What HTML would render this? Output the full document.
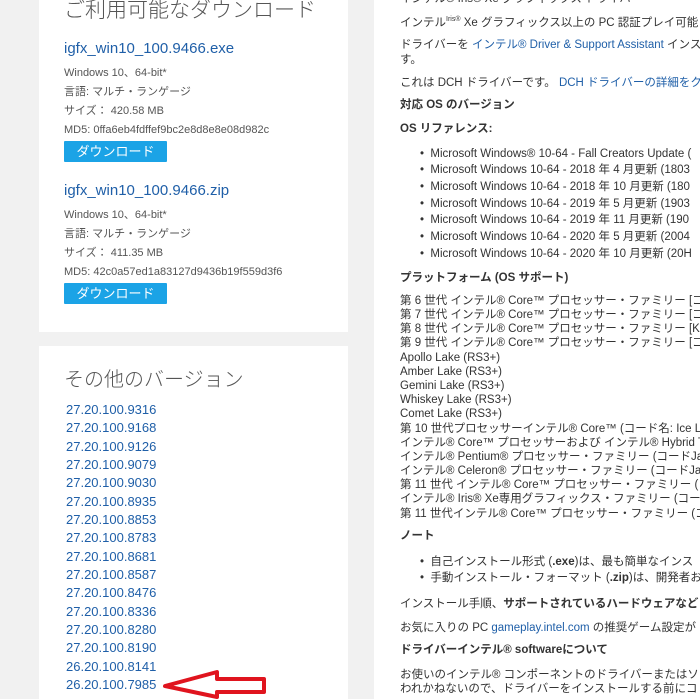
<!DOCTYPE html>
<html><head><meta charset="utf-8"><style>
body{margin:0;width:700px;height:699px;background:#f1f1f1;position:relative;overflow:hidden;font-family:"Liberation Sans","Noto Sans CJK JP",sans-serif;color:#444}
.card{position:absolute;background:#fff}
.t{position:absolute;white-space:nowrap;line-height:1}
.h{font-size:21px;color:#555;font-weight:300}
.lk{color:#1f5fa8}
.s{font-size:11px;color:#555}
.btn{position:absolute;left:64px;width:103px;height:21px;background:#1ba3e6;color:#fff;font-size:13px;text-align:center;line-height:21px;border-radius:1px}
.r{font-size:11.5px;color:#333}
.b{font-weight:bold}
.v{font-size:13px;color:#1f5fa8;left:66px}
</style></head><body>
<div class="card" style="left:39px;top:0;width:309px;height:332px"></div>
<div class="card" style="left:39px;top:346px;width:309px;height:353px"></div>
<div class="card" style="left:374px;top:0;width:326px;height:699px"></div>

<div class="t h" style="left:64px;top:0">ご利用可能なダウンロード</div>
<div class="t lk" style="left:64px;top:41px;font-size:15px">igfx_win10_100.9466.exe</div>
<div class="t s" style="left:64px;top:68px">Windows 10、64-bit*</div>
<div class="t s" style="left:64px;top:87px">言語: マルチ・ランゲージ</div>
<div class="t s" style="left:64px;top:106px">サイズ： 420.58 MB</div>
<div class="t s" style="left:64px;top:125px">MD5: 0ffa6eb4fdffef9bc2e8d8e8e08d982c</div>
<div class="btn" style="top:141px">ダウンロード</div>
<div class="t lk" style="left:64px;top:183px;font-size:15px">igfx_win10_100.9466.zip</div>
<div class="t s" style="left:64px;top:210px">Windows 10、64-bit*</div>
<div class="t s" style="left:64px;top:229px">言語: マルチ・ランゲージ</div>
<div class="t s" style="left:64px;top:248px">サイズ： 411.35 MB</div>
<div class="t s" style="left:64px;top:267px">MD5: 42c0a57ed1a83127d9436b19f559d3f6</div>
<div class="btn" style="top:283px">ダウンロード</div>

<div class="t h" style="left:64px;top:370px;font-size:20px">その他のバージョン</div>
<div class="t v" style="top:403px">27.20.100.9316</div>
<div class="t v" style="top:421px">27.20.100.9168</div>
<div class="t v" style="top:440px">27.20.100.9126</div>
<div class="t v" style="top:458px">27.20.100.9079</div>
<div class="t v" style="top:476px">27.20.100.9030</div>
<div class="t v" style="top:495px">27.20.100.8935</div>
<div class="t v" style="top:513px">27.20.100.8853</div>
<div class="t v" style="top:531px">27.20.100.8783</div>
<div class="t v" style="top:550px">27.20.100.8681</div>
<div class="t v" style="top:568px">27.20.100.8587</div>
<div class="t v" style="top:586px">27.20.100.8476</div>
<div class="t v" style="top:605px">27.20.100.8336</div>
<div class="t v" style="top:623px">27.20.100.8280</div>
<div class="t v" style="top:641px">27.20.100.8190</div>
<div class="t v" style="top:660px">26.20.100.8141</div>
<div class="t v" style="top:678px">26.20.100.7985</div>
<svg style="position:absolute;left:0;top:0" width="700" height="699"><polygon points="165,686 217,672 217,679 264,679 264,692 217,692 217,697" fill="none" stroke="#e0141e" stroke-width="4" stroke-linejoin="round"/></svg>

<div class="t r" style="left:400px;top:-6px">インテル® Iris® Xe グラフィックス ドライバー</div>
<div class="t r" style="left:400px;top:16px">インテル<sup style="font-size:7px">Iris®</sup> Xe グラフィックス以上の PC 認証プレイ可能</div>
<div class="t r" style="left:400px;top:40px">ドライバーを <span class="lk">インテル® Driver &amp; Support Assistant</span> インストール</div>
<div class="t r" style="left:400px;top:55px">す。</div>
<div class="t r" style="left:400px;top:78px">これは DCH ドライバーです。 <span class="lk">DCH ドライバーの詳細をク</span></div>
<div class="t r b" style="left:400px;top:100px">対応 OS のバージョン</div>
<div class="t r b" style="left:400px;top:124px">OS リファレンス:</div>
<div class="t r" style="left:420px;top:149px">•&nbsp;&nbsp;Microsoft Windows® 10-64 - Fall Creators Update (</div>
<div class="t r" style="left:420px;top:165px">•&nbsp;&nbsp;Microsoft Windows 10-64 - 2018 年 4 月更新 (1803</div>
<div class="t r" style="left:420px;top:182px">•&nbsp;&nbsp;Microsoft Windows 10-64 - 2018 年 10 月更新 (180</div>
<div class="t r" style="left:420px;top:199px">•&nbsp;&nbsp;Microsoft Windows 10-64 - 2019 年 5 月更新 (1903</div>
<div class="t r" style="left:420px;top:215px">•&nbsp;&nbsp;Microsoft Windows 10-64 - 2019 年 11 月更新 (190</div>
<div class="t r" style="left:420px;top:232px">•&nbsp;&nbsp;Microsoft Windows 10-64 - 2020 年 5 月更新 (2004</div>
<div class="t r" style="left:420px;top:249px">•&nbsp;&nbsp;Microsoft Windows 10-64 - 2020 年 10 月更新 (20H</div>
<div class="t r b" style="left:400px;top:273px">プラットフォーム (OS サポート)</div>
<div class="t r" style="left:400px;top:296px">第 6 世代 インテル® Core™ プロセッサー・ファミリー [コー</div>
<div class="t r" style="left:400px;top:310px">第 7 世代 インテル® Core™ プロセッサー・ファミリー [コー</div>
<div class="t r" style="left:400px;top:324px">第 8 世代 インテル® Core™ プロセッサー・ファミリー [Kab</div>
<div class="t r" style="left:400px;top:338px">第 9 世代 インテル® Core™ プロセッサー・ファミリー [コー</div>
<div class="t r" style="left:400px;top:353px">Apollo Lake (RS3+)</div>
<div class="t r" style="left:400px;top:367px">Amber Lake (RS3+)</div>
<div class="t r" style="left:400px;top:381px">Gemini Lake (RS3+)</div>
<div class="t r" style="left:400px;top:395px">Whiskey Lake (RS3+)</div>
<div class="t r" style="left:400px;top:409px">Comet Lake (RS3+)</div>
<div class="t r" style="left:400px;top:424px">第 10 世代プロセッサーインテル® Core™ (コード名: Ice Lak</div>
<div class="t r" style="left:400px;top:438px">インテル® Core™ プロセッサーおよび インテル® Hybrid Te</div>
<div class="t r" style="left:400px;top:452px">インテル® Pentium® プロセッサー・ファミリー (コードJas</div>
<div class="t r" style="left:400px;top:466px">インテル® Celeron® プロセッサー・ファミリー (コードJas</div>
<div class="t r" style="left:400px;top:480px">第 11 世代 インテル® Core™ プロセッサー・ファミリー (コ</div>
<div class="t r" style="left:400px;top:494px">インテル® Iris® Xe専用グラフィックス・ファミリー (コード</div>
<div class="t r" style="left:400px;top:509px">第 11 世代インテル® Core™ プロセッサー・ファミリー (コ</div>
<div class="t r b" style="left:400px;top:531px">ノート</div>
<div class="t r" style="left:420px;top:557px">•&nbsp;&nbsp;自己インストール形式 (<b>.exe</b>)は、最も簡単なインス</div>
<div class="t r" style="left:420px;top:573px">•&nbsp;&nbsp;手動インストール・フォーマット (<b>.zip</b>)は、開発者お</div>
<div class="t r" style="left:400px;top:599px">インストール手順、<b>サポートされているハードウェアなど</b></div>
<div class="t r" style="left:400px;top:623px">お気に入りの PC <span class="lk">gameplay.intel.com</span> の推奨ゲーム設定が</div>
<div class="t r b" style="left:400px;top:645px">ドライバーインテル® softwareについて</div>
<div class="t r" style="left:400px;top:670px">お使いのインテル® コンポーネントのドライバーまたはソ</div>
<div class="t r" style="left:400px;top:684px">われかねないので、ドライバーをインストールする前にコ</div>
</body></html>
